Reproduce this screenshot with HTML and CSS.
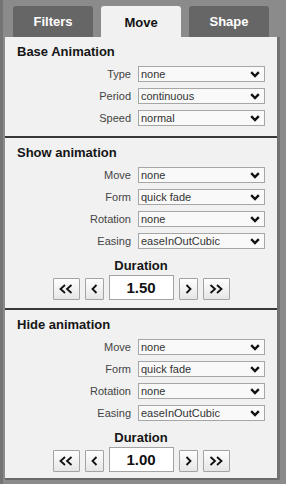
FILE: index.html
```html
<!DOCTYPE html>
<html>
<head>
<meta charset="utf-8">
<link rel="stylesheet" href="styles.css">
</head>
<body>
<div class="app">
  <div class="tabs">
    <div class="tab">Filters</div>
    <div class="tab active">Move</div>
    <div class="tab">Shape</div>
  </div>
  <div class="panel">
    <section class="sec">
      <h2>Base Animation</h2>
      <div class="row"><span class="lbl">Type</span><div class="sel">none<svg class="chev" viewBox="0 0 10 7"><polyline points="1.2,1.2 5,5 8.8,1.2"/></svg></div></div>
      <div class="row"><span class="lbl">Period</span><div class="sel">continuous<svg class="chev" viewBox="0 0 10 7"><polyline points="1.2,1.2 5,5 8.8,1.2"/></svg></div></div>
      <div class="row"><span class="lbl">Speed</span><div class="sel">normal<svg class="chev" viewBox="0 0 10 7"><polyline points="1.2,1.2 5,5 8.8,1.2"/></svg></div></div>
    </section>
    <section class="sec">
      <h2>Show animation</h2>
      <div class="row"><span class="lbl">Move</span><div class="sel">none<svg class="chev" viewBox="0 0 10 7"><polyline points="1.2,1.2 5,5 8.8,1.2"/></svg></div></div>
      <div class="row"><span class="lbl">Form</span><div class="sel">quick fade<svg class="chev" viewBox="0 0 10 7"><polyline points="1.2,1.2 5,5 8.8,1.2"/></svg></div></div>
      <div class="row"><span class="lbl">Rotation</span><div class="sel">none<svg class="chev" viewBox="0 0 10 7"><polyline points="1.2,1.2 5,5 8.8,1.2"/></svg></div></div>
      <div class="row"><span class="lbl">Easing</span><div class="sel">easeInOutCubic<svg class="chev" viewBox="0 0 10 7"><polyline points="1.2,1.2 5,5 8.8,1.2"/></svg></div></div>
      <div class="dur">Duration</div>
      <div class="ctrl">
        <div class="btn wide"><svg viewBox="0 0 14 10"><polyline points="6,1 1.5,5 6,9"/><polyline points="12.5,1 8,5 12.5,9"/></svg></div>
        <div class="btn"><svg viewBox="0 0 7 10"><polyline points="5.5,1 1.5,5 5.5,9"/></svg></div>
        <div class="val">1.50</div>
        <div class="btn"><svg viewBox="0 0 7 10"><polyline points="1.5,1 5.5,5 1.5,9"/></svg></div>
        <div class="btn wide"><svg viewBox="0 0 14 10"><polyline points="1.5,1 6,5 1.5,9"/><polyline points="8,1 12.5,5 8,9"/></svg></div>
      </div>
    </section>
    <section class="sec last">
      <h2>Hide animation</h2>
      <div class="row"><span class="lbl">Move</span><div class="sel">none<svg class="chev" viewBox="0 0 10 7"><polyline points="1.2,1.2 5,5 8.8,1.2"/></svg></div></div>
      <div class="row"><span class="lbl">Form</span><div class="sel">quick fade<svg class="chev" viewBox="0 0 10 7"><polyline points="1.2,1.2 5,5 8.8,1.2"/></svg></div></div>
      <div class="row"><span class="lbl">Rotation</span><div class="sel">none<svg class="chev" viewBox="0 0 10 7"><polyline points="1.2,1.2 5,5 8.8,1.2"/></svg></div></div>
      <div class="row"><span class="lbl">Easing</span><div class="sel">easeInOutCubic<svg class="chev" viewBox="0 0 10 7"><polyline points="1.2,1.2 5,5 8.8,1.2"/></svg></div></div>
      <div class="dur">Duration</div>
      <div class="ctrl">
        <div class="btn wide"><svg viewBox="0 0 14 10"><polyline points="6,1 1.5,5 6,9"/><polyline points="12.5,1 8,5 12.5,9"/></svg></div>
        <div class="btn"><svg viewBox="0 0 7 10"><polyline points="5.5,1 1.5,5 5.5,9"/></svg></div>
        <div class="val">1.00</div>
        <div class="btn"><svg viewBox="0 0 7 10"><polyline points="1.5,1 5.5,5 1.5,9"/></svg></div>
        <div class="btn wide"><svg viewBox="0 0 14 10"><polyline points="1.5,1 6,5 1.5,9"/><polyline points="8,1 12.5,5 8,9"/></svg></div>
      </div>
    </section>
  </div>
</div>
</body>
</html>
```
FILE: styles.css
```css
* { box-sizing: border-box; }
html, body { margin: 0; padding: 0; }
body {
  width: 286px; height: 484px;
  background: #8b8b8b;
  font-family: "Liberation Sans", Arial, sans-serif;
  overflow: hidden;
}
.app {
  height: 484px;
  padding: 6px 0 0 2px;
  border-left: 3px solid #747474;
}
.tabs {
  display: flex;
  gap: 8px;
  padding-left: 8px;
  height: 31px;
}
.tab {
  width: 80px;
  height: 31px;
  background: #666;
  color: #fff;
  font-weight: bold;
  font-size: 13px;
  display: flex;
  align-items: center;
  justify-content: center;
  border-radius: 3px 3px 0 0;
}
.tab.active {
  background: #f1f1f1;
  color: #111;
  height: 32px;
}
.panel {
  width: 275px;
  background: #f1f1f1;
  border-right: 3px solid #727272;
}
.sec {
  padding: 7px 0 7px 0;
  border-bottom: 2px solid #383838;
}
.sec + .sec { padding-bottom: 8px; }
.sec.last { border-bottom: 2px solid #6a6a6a; padding-bottom: 6px; }
h2 {
  margin: 0 0 4px 12px;
  font-size: 13px;
  font-weight: bold;
  color: #151515;
  height: 15px;
  line-height: 15px;
}
.row {
  display: flex;
  align-items: center;
  height: 22px;
}
.lbl {
  width: 133px;
  text-align: right;
  font-size: 11px;
  color: #444;
  padding-right: 7px;
}
.sel {
  position: relative;
  width: 127px;
  height: 16px;
  border: 1px solid #a6a6a6;
  background: #f9f9f9;
  font-size: 11px;
  color: #333;
  line-height: 14px;
  padding-left: 2px;
}
.chev {
  position: absolute;
  right: 4px; top: 4px;
  width: 10px; height: 7px;
}
.chev polyline {
  fill: none;
  stroke: #111;
  stroke-width: 2.4;
}
.dur {
  text-align: center;
  font-weight: bold;
  font-size: 13px;
  color: #151515;
  margin-top: 6px;
  height: 16px;
  line-height: 16px;
}
.ctrl {
  display: flex;
  justify-content: center;
  align-items: flex-end;
  gap: 5px;
  margin-top: 1px;
  height: 25px;
}
.btn {
  width: 19px;
  height: 22px;
  border: 1px solid #a3a3a3;
  background: linear-gradient(#fefefe, #e6e6e6);
  display: flex;
  align-items: center;
  justify-content: center;
  border-radius: 1px;
}
.btn svg { width: 7px; height: 10px; }
.btn.wide { width: 27px; }
.btn.wide svg { width: 14px; height: 10px; }
.btn polyline {
  fill: none;
  stroke: #111;
  stroke-width: 1.8;
}
.val {
  width: 65px;
  height: 25px;
  border: 1px solid #a3a3a3;
  background: #fff;
  font-size: 15px;
  font-weight: bold;
  text-align: center;
  line-height: 23px;
  color: #111;
}
```
